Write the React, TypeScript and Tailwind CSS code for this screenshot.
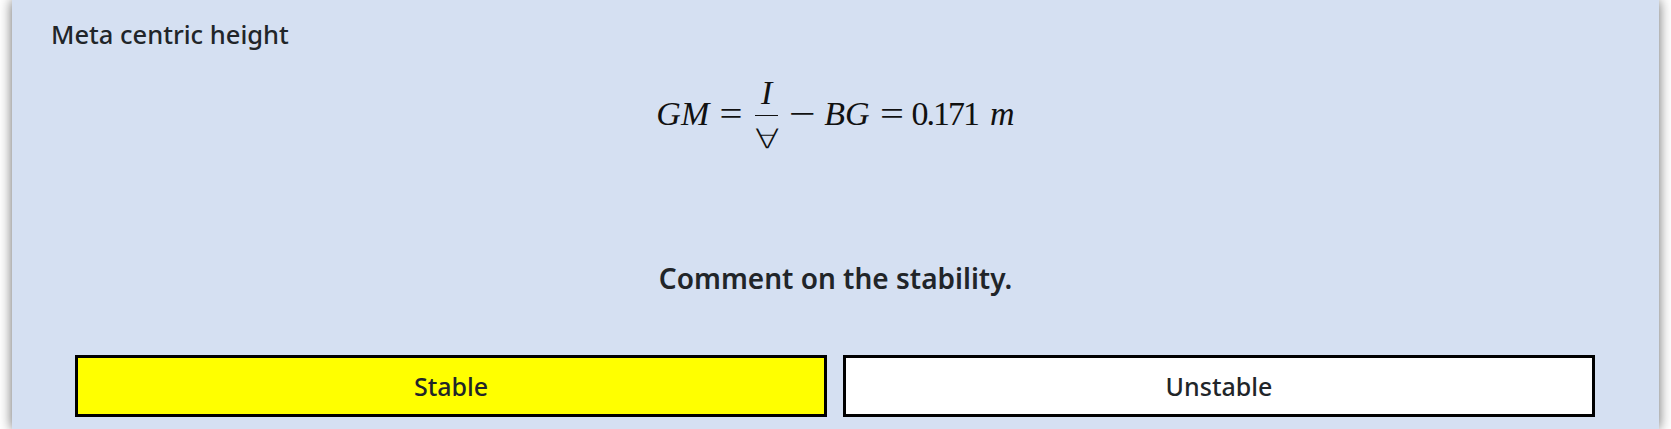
export default function App() {
  const sans = { fontFamily: '"Noto Sans", "Open Sans", sans-serif' };

  return (
    <div className="h-[429px] w-full overflow-hidden bg-white px-[12px]" style={sans}>
      <div className="flex h-full flex-col bg-[#d5e0f2] text-[#212529] shadow-[0_0_12px_rgba(0,0,0,0.6)]">
        {/* Title */}
        <div className="pl-[39px] pt-[18px] text-[25.5px] font-medium leading-[32px]">Meta centric height</div>

        {/* Equation */}
        <div
          className="mt-[29px] flex h-[70px] items-center justify-center text-[34px] leading-none text-[#111]"
          style={{ fontFamily: '"Liberation Serif", "DejaVu Serif", serif' }}
        >
          <span className="italic">GM</span>
          <span className="ml-[11px] mr-[13px] inline-block w-[22px] scale-x-[1.2] text-center">=</span>
          <span className="flex flex-col items-center">
            <span className="italic">I</span>
            <span className="mb-[9px] mt-[5px] h-px w-[23px] bg-[#111]" />
            <span
              className="inline-block scale-x-[1.35] text-[27px] font-extralight"
              style={{ fontFamily: '"DejaVu Sans", sans-serif' }}
            >
              ∀
            </span>
          </span>
          <span className="ml-[14px] mr-[12px] inline-block w-[20px] scale-x-[1.4] text-center">−</span>
          <span className="italic">BG</span>
          <span className="ml-[10px] mr-[8px] inline-block w-[24px] scale-x-[1.25] text-center">=</span>
          <span className="tracking-[-2px]">0.171</span>
          <span className="ml-[12px] italic">m</span>
        </div>

        {/* Question */}
        <div className="mt-[111px] text-center text-[28px] font-semibold leading-[36px]">
          Comment on the stability.
        </div>

        {/* Options */}
        <div className="mt-[59px] grid grid-cols-2 gap-4 pl-[63px] pr-[64px]">
          <button className="flex h-[62px] items-center justify-center border-[3px] border-black bg-[#ffff00] text-[25px] font-medium leading-none">
            Stable
          </button>
          <button className="flex h-[62px] items-center justify-center border-[3px] border-black bg-white text-[25px] font-medium leading-none">
            Unstable
          </button>
        </div>
      </div>
    </div>
  );
}
